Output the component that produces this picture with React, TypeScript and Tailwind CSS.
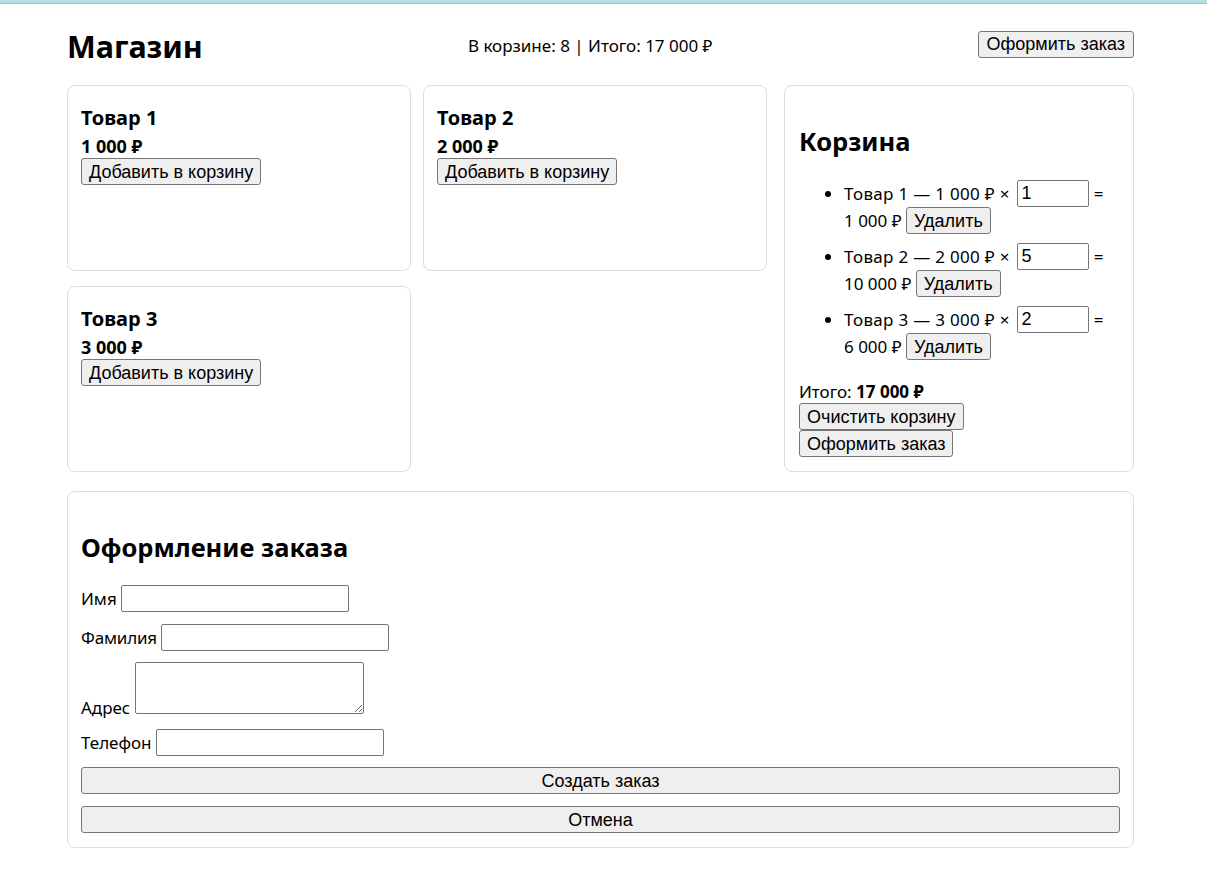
import { useState } from "react";

const products = [
  { id: 1, name: "Товар 1", price: 1000 },
  { id: 2, name: "Товар 2", price: 2000 },
  { id: 3, name: "Товар 3", price: 3000 },
];

const fmt = (n: number) => n.toLocaleString("ru-RU").replace(/\s/g, " ") + " ₽";

const btn =
  "bg-[#efefef] border border-[#767676] rounded-[3px] px-[7px] h-[27px] text-[18px] leading-[20px] text-black font-['Liberation_Sans',Arial,sans-serif] hover:bg-[#e5e5e5]";

const field =
  "border border-[#767676] rounded-[2px] bg-white px-[3px] text-[18px] font-['Liberation_Sans',Arial,sans-serif] outline-none";

const App = () => {
  const [qty, setQty] = useState<Record<number, number>>({ 1: 1, 2: 5, 3: 2 });

  const count = Object.values(qty).reduce((a, b) => a + b, 0);
  const total = products.reduce((s, p) => s + p.price * (qty[p.id] || 0), 0);

  return (
    <div className="min-h-screen bg-white text-black font-['Noto_Sans','Segoe_UI',sans-serif] text-[17px]">
      {/* top strip */}
      <div className="h-[4px] bg-[#b6e0e4] border-b border-[#93c6cb]" />

      <div className="w-[1067px] ml-[67px] pt-[22px]">
        {/* Header */}
        <header className="flex items-center justify-between h-[40px]">
          <h1 className="text-[30.5px] leading-[40px] font-bold">Магазин</h1>
          <div className="leading-[24px]">
            В корзине: {count} | Итого: {fmt(total)}
          </div>
          <button className={btn + " px-[8px] mb-[4px]"}>Оформить заказ</button>
        </header>

        {/* Products + cart */}
        <div className="flex gap-[17px] mt-[19px]">
          <div className="grid grid-cols-2 gap-x-[12px] gap-y-[15px] w-[700px]">
            {products.map((p) => (
              <div
                key={p.id}
                className="h-[186px] border border-[#dddddd] rounded-[8px] px-[13px] pt-[19px]"
              >
                <h3 className="text-[20px] leading-[26px] font-bold">{p.name}</h3>
                <div className="font-bold text-[18px] leading-[20px] mt-[5px]">{fmt(p.price)}</div>
                <button
                  className={btn + " mt-[2px]"}
                  onClick={() => setQty({ ...qty, [p.id]: (qty[p.id] || 0) + 1 })}
                >
                  Добавить в корзину
                </button>
              </div>
            ))}
          </div>

          <div className="w-[350px] h-[387px] border border-[#dddddd] rounded-[8px] px-[14px] pt-[41px]">
            <h2 className="text-[25.5px] leading-[28px] font-bold">Корзина</h2>
            <ul className="list-disc pl-[45px] mt-[25px] mb-[21px]">
              {products.map((p) => (
                <li key={p.id} className="mb-[9px] leading-[27px]">
                  <div className="flex items-center h-[27px]">
                    <span className="tracking-[0.3px]">
                      {p.name} — {fmt(p.price)} ×&nbsp;
                    </span>
                    <input
                      className={field + " w-[72px] h-[27px] ml-[3px]"}
                      value={qty[p.id]}
                      onChange={(e) => setQty({ ...qty, [p.id]: Number(e.target.value) || 0 })}
                    />
                    <span>&nbsp;=</span>
                  </div>
                  <div className="flex items-center h-[27px]">
                    <span>{fmt(p.price * (qty[p.id] || 0))}&nbsp;</span>
                    <button className={btn + " h-[26px]"}>Удалить</button>
                  </div>
                </li>
              ))}
            </ul>
            <div className="leading-[22px]">
              Итого: <b>{fmt(total)}</b>
            </div>
            <div className="flex flex-col items-start">
              <button className={btn} onClick={() => setQty({})}>
                Очистить корзину
              </button>
              <button className={btn}>Оформить заказ</button>
            </div>
          </div>
        </div>

        {/* Checkout */}
        <div className="mt-[19px] h-[357px] border border-[#dddddd] rounded-[8px] px-[13px] pt-[41px]">
          <h2 className="text-[25.5px] leading-[28px] font-bold">Оформление заказа</h2>
          <div className="flex items-center mt-[24px] h-[27px]">
            <label>Имя&nbsp;</label>
            <input className={field + " w-[228px] h-[27px]"} />
          </div>
          <div className="flex items-center mt-[12px] h-[27px]">
            <label className="tracking-[-0.2px]">Фамилия&nbsp;</label>
            <input className={field + " w-[228px] h-[27px]"} />
          </div>
          <div className="flex items-end mt-[11px]">
            <label className="leading-[20px] translate-y-[4px]">Адрес&nbsp;</label>
            <textarea className={field + " w-[229px] h-[52px] block"} />
          </div>
          <div className="flex items-center mt-[15px] h-[27px]">
            <label>Телефон&nbsp;</label>
            <input className={field + " w-[228px] h-[27px]"} />
          </div>
          <button className={btn + " w-full block mt-[11px]"}>Создать заказ</button>
          <button className={btn + " w-full block mt-[12px]"}>Отмена</button>
        </div>
      </div>
    </div>
  );
};

export default App;
